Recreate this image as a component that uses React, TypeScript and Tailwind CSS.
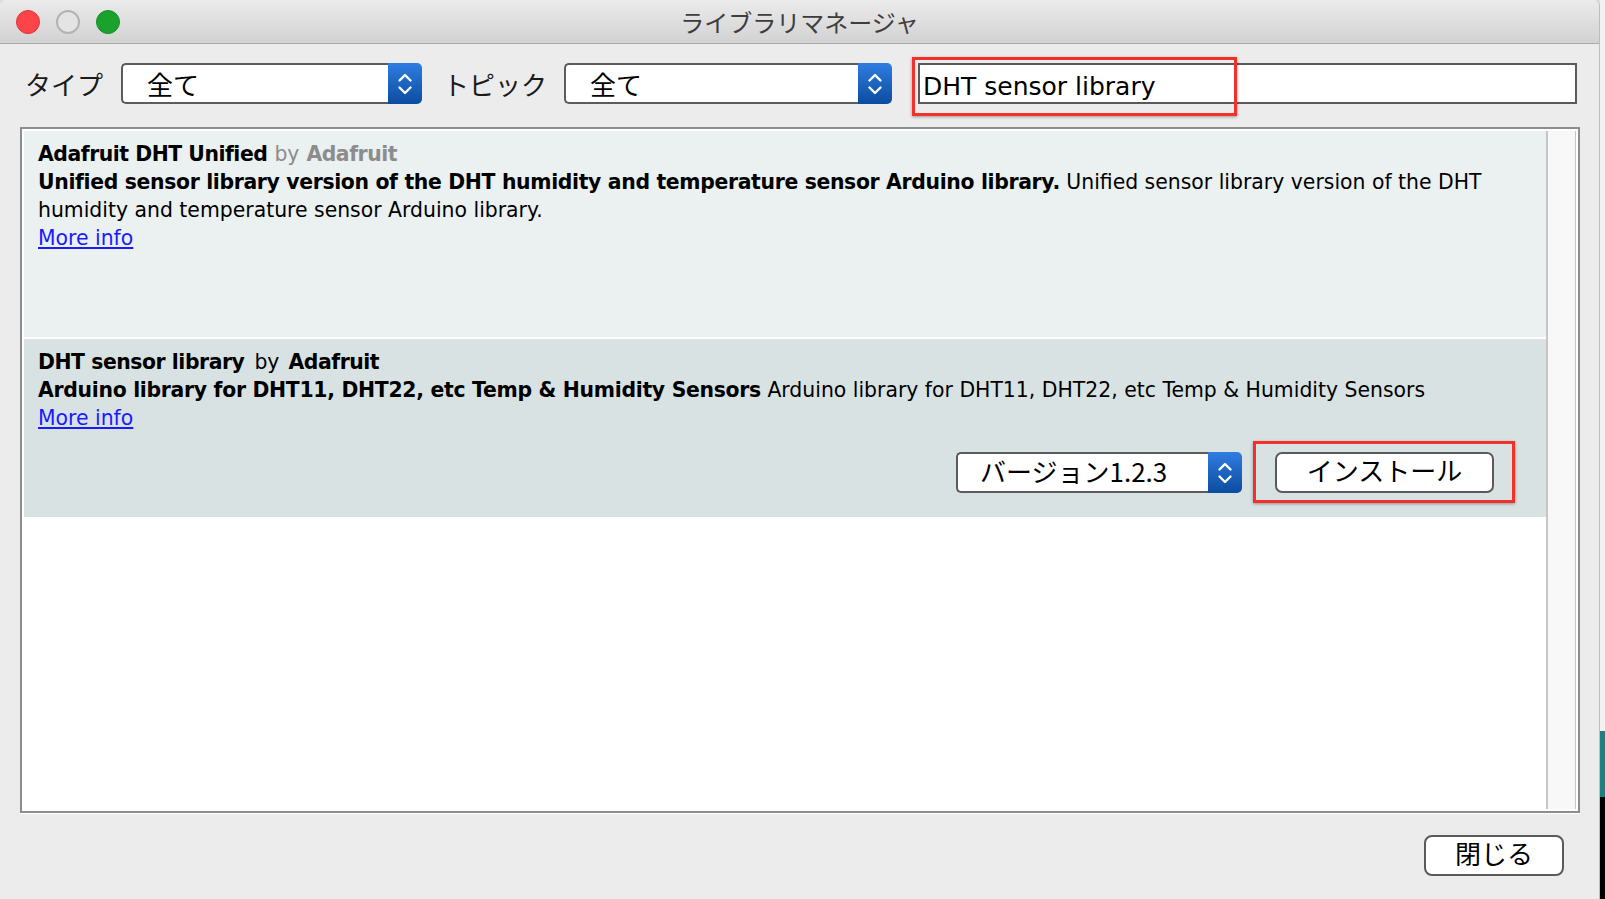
import React from "react"

const jp = "font-['Noto_Sans_CJK_JP',sans-serif]"
const body = "font-['DejaVu_Sans','Noto_Sans_CJK_JP',sans-serif]"

function Stepper() {
  return (
    <div className="w-[34px] h-full shrink-0 rounded-r-[5px] bg-linear-to-b from-[#2f7de2] to-[#0a4c9f] flex items-center justify-center">
      <svg width="16" height="26" viewBox="0 0 16 26" fill="none" stroke="white" strokeWidth="2.4" strokeLinecap="round" strokeLinejoin="round">
        <path d="M2.5 9.5 L8 4 L13.5 9.5" />
        <path d="M2.5 16.5 L8 22 L13.5 16.5" />
      </svg>
    </div>
  )
}

function Select({ label, width, pad }: { label: string; width: string; pad: string }) {
  return (
    <div className={`flex h-[41px] shrink-0 ${width}`}>
      <div className={`flex-1 flex items-center bg-white border-2 border-r-0 border-[#5c5c5c] rounded-l-[5px] text-[26px] text-black ${pad} ${jp}`}>
        {label}
      </div>
      <Stepper />
    </div>
  )
}

function MoreInfo() {
  return <a className="text-[#1a1aff] underline underline-offset-2 cursor-pointer">More info</a>
}

export default function App() {
  return (
    <div className="w-[1605px] h-[899px] flex overflow-hidden bg-[#dcdcdc]">
      {/* window */}
      <div className="w-[1600px] h-full flex flex-col bg-[#ececec] border-r border-[#bdbdbd] rounded-tr-[6px] rounded-tl-[6px] overflow-hidden">
        {/* title bar */}
        <div className="h-[44px] shrink-0 grid grid-cols-[1fr_auto_1fr] items-center bg-linear-to-b from-[#ebebeb] to-[#d2d2d2] border-b border-[#a9a9a9]">
          <div className="flex items-center gap-[16px] pl-[16px]">
            <span className="w-[24px] h-[24px] rounded-full bg-[#fc4449] border border-[#e0353a]" />
            <span className="w-[24px] h-[24px] rounded-full bg-[#e4e4e4] border-2 border-[#b3b3b3]" />
            <span className="w-[24px] h-[24px] rounded-full bg-[#1aa22d] border border-[#14902a]" />
          </div>
          <div className={`text-[24px] text-[#3d3d3d] ${jp}`}>ライブラリマネージャ</div>
          <div />
        </div>

        {/* toolbar */}
        <div className={`mt-[19px] h-[41px] flex items-center pl-[25px] ${jp}`}>
          <span className="w-[96px] text-[26px] text-[#1a1a1a]">タイプ</span>
          <Select label="全て" width="w-[301px]" pad="pl-[24px]" />
          <span className="w-[142px] pl-[21px] text-[26px] text-[#1a1a1a]">トピック</span>
          <Select label="全て" width="w-[328px]" pad="pl-[24px]" />
          <div className="relative ml-[26px] w-[659px] h-[41px] bg-white border-2 border-[#5a5a5a] flex items-center pl-[3px] pt-[6px]">
            <span className={`text-[25px] text-black ${body}`}>DHT sensor library</span>
            <div className="absolute left-[-8px] top-[-8px] w-[325px] h-[59px] border-[3px] border-[#f4302a] shadow-[0_1px_3px_rgba(0,0,0,0.35)] pointer-events-none" />
          </div>
        </div>

        {/* list panel */}
        <div className="mt-[23px] ml-[20px] w-[1560px] h-[686px] border-2 border-[#8d8d8d] bg-white p-[2px] flex shadow-[0_1px_0_#ffffff]">
          <div className={`flex-1 flex flex-col text-[20.4px] leading-[28px] text-black ${body}`}>
            {/* item 1 */}
            <div className="h-[206px] bg-[#ebf0f0] pt-[9px] pl-[14px] whitespace-nowrap">
              <div>
                <span className="font-bold tracking-[-0.47px]">Adafruit DHT Unified</span>
                <span className="ml-[7px] text-[#8c8c8c]">by</span>
                <span className="ml-[7px] font-bold tracking-[-0.45px] text-[#8c8c8c]">Adafruit</span>
              </div>
              <div>
                <span className="font-bold tracking-[-0.34px]">Unified sensor library version of the DHT humidity and temperature sensor Arduino library.</span>{" "}
                Unified sensor library version of the DHT
              </div>
              <div>humidity and temperature sensor Arduino library.</div>
              <div>
                <MoreInfo />
              </div>
            </div>
            <div className="h-[2px] bg-white" />
            {/* item 2 */}
            <div className="h-[178px] bg-[#d9e2e2] pt-[9px] pl-[14px] pr-[52px] whitespace-nowrap flex flex-col">
              <div>
                <span className="font-bold tracking-[-0.45px]">DHT sensor library</span>
                <span className="ml-[10px]">by</span>
                <span className="ml-[9px] font-bold tracking-[-0.45px]">Adafruit</span>
              </div>
              <div>
                <span className="font-bold tracking-[-0.3px]">Arduino library for DHT11, DHT22, etc Temp &amp; Humidity Sensors</span>{" "}
                Arduino library for DHT11, DHT22, etc Temp &amp; Humidity Sensors
              </div>
              <div>
                <MoreInfo />
              </div>
              <div className="mt-[20px] flex justify-end items-center">
                <Select label="バージョン1.2.3" width="w-[286px]" pad="pl-[22px] pb-[3px]" />
                <div className="relative ml-[33px]">
                  <div className={`w-[219px] h-[41px] bg-white border-2 border-[#5a5a5a] rounded-[7px] flex items-center justify-center text-[26px] text-black pb-[5px] ${jp}`}>
                    インストール
                  </div>
                  <div className="absolute left-[-22px] top-[-11px] w-[262px] h-[62px] border-[3px] border-[#f4302a] shadow-[0_1px_3px_rgba(0,0,0,0.35)] pointer-events-none" />
                </div>
              </div>
            </div>
          </div>
          {/* scrollbar track */}
          <div className="w-[30px] h-full bg-[#f8f8f8] border-l-2 border-r border-[#c6c6c6]" />
        </div>

        {/* footer */}
        <div className="mt-[22px] flex justify-end pr-[35px]">
          <div className={`w-[140px] h-[41px] bg-white border-2 border-[#5a5a5a] rounded-[8px] flex items-center justify-center text-[26px] text-black pb-[7px] ${jp}`}>
            閉じる
          </div>
        </div>
      </div>

      {/* desktop strip */}
      <div className="w-[5px] h-full flex flex-col">
        <div className="h-[731px] bg-[#f2f2f2]" />
        <div className="h-[66px] bg-[#1d7f80]" />
        <div className="flex-1 bg-black" />
      </div>
    </div>
  )
}
